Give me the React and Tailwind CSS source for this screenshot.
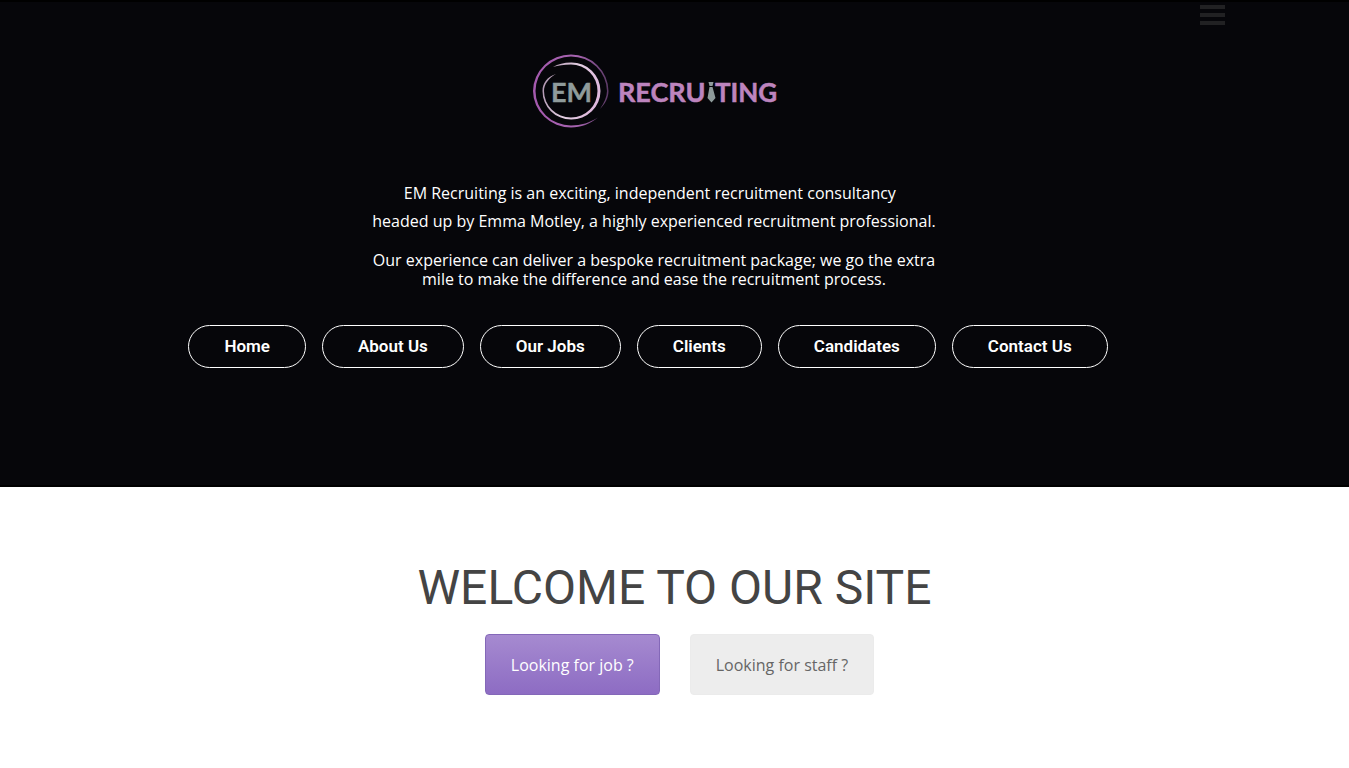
const links = ["Home", "About Us", "Our Jobs", "Clients", "Candidates", "Contact Us"];

function Logo() {
  return (
    <svg
      viewBox="528 48 252 84"
      className="h-[84px] w-[252px]"
      role="img"
      aria-label="EM Recruiting"
      fontFamily="Lato, 'Liberation Sans', sans-serif"
      fontWeight="700"
      fontSize="27"
    >
      <defs>
        <linearGradient id="outer" x1="0" y1="0" x2="1" y2="0">
          <stop offset="0" stopColor="#a459ae" />
          <stop offset="0.6" stopColor="#a664b0" />
          <stop offset="1" stopColor="#5c3a66" />
        </linearGradient>
        <linearGradient id="inner" x1="0" y1="0" x2="1" y2="0.3">
          <stop offset="0" stopColor="#a58aa6" />
          <stop offset="0.6" stopColor="#e3cfe2" />
          <stop offset="1" stopColor="#dfb9dd" />
        </linearGradient>
      </defs>
      <path
        fill="url(#outer)"
        d="M598,117.500 C590,124 581,127.500 571,127.500 A38 37 0 0 1 533,91 A38 37 0 0 1 571,54.500 A37.500 37 0 0 1 608.500,91 C608.500,98 605,104 600,109 C604,103 607,97 607,91 A36 35 0 0 0 571,56.500 A35.500 34.500 0 0 0 535.500,91 A35.500 34.500 0 0 0 571,125.500 C581,125.500 590,122.500 598,117.500 Z"
      />
      <path
        fill="url(#inner)"
        d="M553,67 C558,64 564,62.500 571,62.500 A29 28.500 0 0 1 600.500,91 A29 28.500 0 0 1 571,119.500 A28.500 28.500 0 0 1 542.500,91 C542.500,83 547,77 556,74 C549,78 544,84 544,91 A27 26.500 0 0 0 571,117.500 A26.500 26.500 0 0 0 597.500,91 A26.500 26.500 0 0 0 571,64.500 C564,64.500 558,65.500 553,67 Z"
      />
      <text x="551" y="102" fill="#8f9b9b" stroke="#8f9b9b" strokeWidth="0.4">EM</text>
      <g fill="#bd84be" stroke="#bd84be" strokeWidth="0.5">
        <text x="618" y="102">RECRU</text>
        <text x="715" y="102" fontSize="26">TING</text>
      </g>
      <path fill="#8f9b9b" d="M708.500,82 H713.500 L712.500,86 H709.500 Z M709.500,87 H712.500 L715.500,98 L711.500,102.500 L707.500,98 Z" />
    </svg>
  );
}

export default function App() {
  return (
    <div className="min-h-screen bg-white font-['Open_Sans',sans-serif] text-base">
      <header className="border-y-2 border-black bg-[#06060a] pb-[117px] text-white">
        <div className="flex justify-end pr-[124px] pt-[3px]">
          <button type="button" aria-label="Menu" className="flex w-[25px] flex-col gap-1">
            <span className="h-1 w-full bg-[#212123]" />
            <span className="h-1 w-full bg-[#212123]" />
            <span className="h-1 w-full bg-[#212123]" />
          </button>
        </div>

        <div className="flex flex-col items-center pr-[41px] pt-[23px]">
          <Logo />
          <div className="mt-[47px] text-center">
            <p className="leading-7">
              EM Recruiting is an exciting, independent recruitment consultancy&nbsp;&nbsp;
              <br />
              headed up by Emma Motley, a highly experienced recruitment professional.
            </p>
            <p className="mt-4 leading-[19px]">
              Our experience can deliver a bespoke recruitment package; we go the extra
              <br />
              mile to make the difference and ease the recruitment process.
            </p>
          </div>
        </div>

        <nav className="mt-9 flex flex-wrap justify-center gap-4 pr-[53px] font-['Roboto',sans-serif] text-[17px] font-semibold">
          {links.map((label) => (
            <a
              key={label}
              href="#"
              className="flex h-[43px] items-center rounded-full border border-white px-[35px]"
            >
              {label}
            </a>
          ))}
        </nav>
      </header>

      <main className="flex flex-col items-center pt-[71px]">
        <h1 className="font-['Roboto',sans-serif] text-5xl leading-[60px] text-[#444444]">
          WELCOME TO OUR SITE
        </h1>
        <div className="mt-4 flex gap-[30px] pl-2.5">
          <button
            type="button"
            className="h-[61px] rounded border border-[#8468b8] bg-linear-to-b from-[#a68ad0] to-[#8d6cc3] px-[25px] text-white"
          >
            Looking for job ?
          </button>
          <button
            type="button"
            className="h-[61px] rounded border border-[#ebebeb] bg-[#ededed] px-[25px] text-[#666666]"
          >
            Looking for staff ?
          </button>
        </div>
      </main>
    </div>
  );
}
